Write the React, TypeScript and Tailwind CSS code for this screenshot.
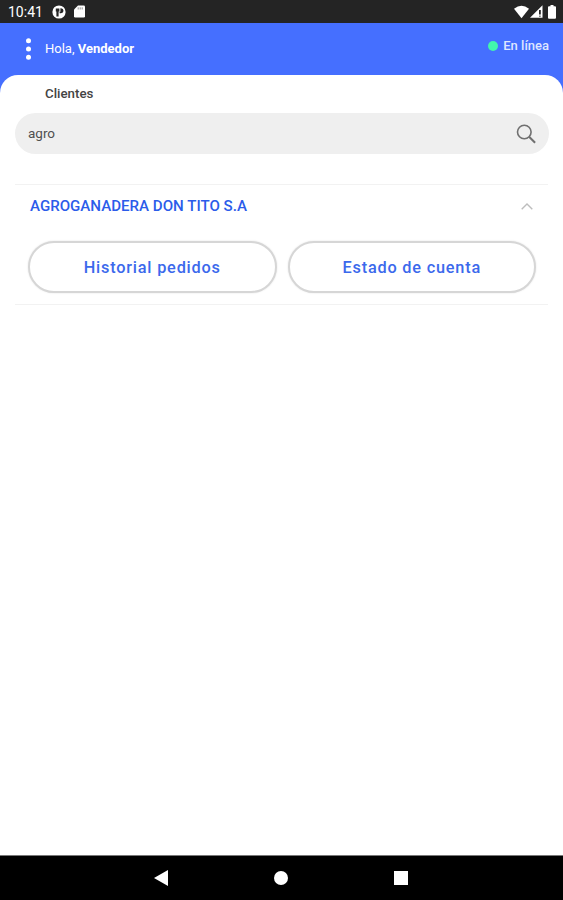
const actions = ["Historial pedidos", "Estado de cuenta"];

function StatusBar() {
  return (
    <div className="flex h-[23px] shrink-0 items-center bg-[#242424] pr-[7px] pl-2 text-white">
      <span className="w-[35px] text-[14px] leading-none whitespace-nowrap">10:41</span>
      <svg className="ml-[9px] h-[14px] w-[14px]" viewBox="0 0 14 14">
        <circle cx="7" cy="7" r="6.6" fill="#fff" />
        <path d="M3.8 3.6H7.4V6.6H6.6V11.6H4.4V6.4H3.8Z" fill="#242424" />
        <path d="M8.4 3.2H9A2.5 2.5 0 0 1 9 8.2H7.6V6.8H8.4Z" fill="#242424" />
      </svg>
      <svg className="ml-2 h-[13px] w-[11px]" viewBox="0 0 11 13">
        <path
          d="M4 .5H9.7Q11 .5 11 1.8V11.2Q11 12.5 9.7 12.5H1.3Q0 12.5 0 11.2V4.5Z"
          fill="#fff"
        />
        <path d="M4.2 2.3V4.5M6.2 2.3V4.5M8.2 2.3V4.5" stroke="#777" strokeWidth=".8" />
      </svg>
      <div className="ml-auto flex items-center">
        <svg className="h-[14px] w-[15px]" viewBox="0 0 15 14">
          <path d="M0 3.8Q7.5-2.2 15 3.8L7.5 13.2Z" fill="#fff" />
        </svg>
        <svg className="ml-px h-[13px] w-[13px]" viewBox="0 0 13 13">
          <path d="M0 12.7 12.5.2V12.7Z" fill="#fff" />
          <path d="M9.9 5V9.6" stroke="#242424" strokeWidth="1.8" />
          <path d="M9.9 10.4V12" stroke="#777" strokeWidth="1.6" />
        </svg>
        <svg className="ml-[5px] h-[14px] w-[8px]" viewBox="0 0 8 14">
          <path
            d="M2.5 0H5.5V1.3H7Q8 1.3 8 2.3V12.7Q8 13.7 7 13.7H1Q0 13.7 0 12.7V2.3Q0 1.3 1 1.3H2.5Z"
            fill="#fff"
          />
        </svg>
      </div>
    </div>
  );
}

function Header() {
  return (
    <header className="flex h-[52px] shrink-0 text-white">
      <svg className="mt-[15px] ml-[25px] h-[22px] w-[7px]" viewBox="0 0 7 22" fill="#fff">
        <circle cx="3.5" cy="2.8" r="2.5" />
        <circle cx="3.5" cy="11" r="2.5" />
        <circle cx="3.5" cy="19.2" r="2.5" />
      </svg>
      <p className="mt-[18px] ml-[13px] text-[13px] leading-4">
        Hola, <span className="font-bold">Vendedor</span>
      </p>
      <div className="mt-[15px] mr-[14px] ml-auto flex h-4 items-center">
        <span className="h-[10px] w-[10px] rounded-full bg-[#42f5ad]" />
        <span className="ml-[5px] text-[13px] leading-4 font-medium text-[#dfe6ff]">
          En línea
        </span>
      </div>
    </header>
  );
}

function SearchField() {
  return (
    <div className="mr-[14px] ml-[15px] mt-[11px] flex h-[41px] items-center rounded-full bg-[#efefef] pr-[13px] pl-[13px]">
      <span className="pb-[2px] text-[13.5px] leading-4 text-[#505050]">agro</span>
      <svg
        className="ml-auto h-5 w-5"
        viewBox="0 0 20 20"
        fill="none"
        stroke="#707070"
        strokeWidth="1.6"
      >
        <circle cx="8.3" cy="8" r="6.8" />
        <path d="m13.1 12.8 6 6" strokeWidth="2" />
      </svg>
    </div>
  );
}

function ClientPanel() {
  return (
    <section className="mx-[15px] mt-[30px] h-[121px] border-y border-[#f2f2f2]">
      <div className="flex h-[42px] items-center pr-[15px] pl-[15px]">
        <h2 className="text-[15.1px] leading-5 font-medium text-[#2b5cea]">
          AGROGANADERA DON TITO S.A
        </h2>
        <svg
          className="ml-auto h-[7px] w-[12px]"
          viewBox="0 0 12 7"
          fill="none"
          stroke="#bdbdbd"
          strokeWidth="1.4"
        >
          <path d="m.7 6.3 5.3-5.3 5.3 5.3" />
        </svg>
      </div>
      <div className="mt-[14px] flex gap-[11px] pr-[12px] pl-[13px]">
        {actions.map((label) => (
          <button
            key={label}
            className="h-[52px] flex-1 rounded-full border-2 border-[#d6d6d6] bg-white pt-[2px] text-[16.3px] font-medium tracking-[0.8px] text-[#3b69ec] shadow-[0_0_2px_rgba(0,0,0,0.12)]"
          >
            {label}
          </button>
        ))}
      </div>
    </section>
  );
}

function NavigationBar() {
  return (
    <nav className="grid h-[45px] shrink-0 grid-cols-[120px_120px_120px] items-center justify-center border-t border-[#777] bg-black pr-px">
      <svg className="mx-auto h-4 w-[14px]" viewBox="0 0 14 16">
        <path d="M14 0V16L0 8Z" fill="#fff" />
      </svg>
      <span className="mx-auto h-[14px] w-[14px] rounded-full bg-white" />
      <span className="mx-auto h-[14px] w-[14px] bg-white" />
    </nav>
  );
}

export default function App() {
  return (
    <div className="flex h-screen flex-col bg-[#456fff] font-[Roboto,sans-serif]">
      <StatusBar />
      <Header />
      <main className="flex-1 rounded-t-[18px] bg-white">
        <h1 className="pt-[11px] pl-[45px] text-[13.3px] leading-4 font-medium text-[#444]">
          Clientes
        </h1>
        <SearchField />
        <ClientPanel />
      </main>
      <NavigationBar />
    </div>
  );
}
